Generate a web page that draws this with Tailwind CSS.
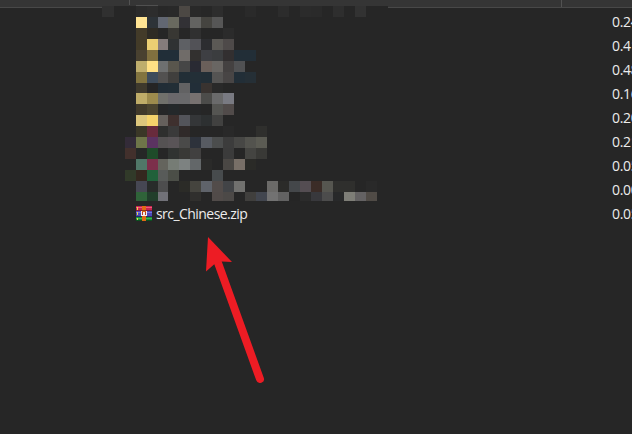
<!DOCTYPE html>
<html lang="en">
<head>
<meta charset="utf-8">
<title>Archive files</title>
<script src="https://cdn.jsdelivr.net/npm/@tailwindcss/browser@4"></script>
</head>
<body class="relative h-[434px] w-[632px] overflow-hidden bg-[#262626] font-['Open_Sans','Noto_Sans',sans-serif] text-[#ececec]">
<header class="flex h-2 w-full border-b border-[#484848] bg-[#353535]">
  <div class="h-[5px] w-[130px] border-r border-[#525252]"></div>
  <div class="relative w-[432px] overflow-hidden border-r border-[#525252]">
    <span class="absolute left-[9px] -top-[14px] font-['Noto_Sans_CJK_SC',sans-serif] text-[12px] leading-[16px]">名称</span>
    <div class="absolute left-1.5 top-[5px] h-px w-[22px] bg-[#505050]"></div>
  </div>
</header>
<main class="flex justify-between">
  <section class="w-[400px]">
    <div id="mosaic" class="relative -mt-0.5 pl-[102px]"></div>
    <div class="flex h-[26px] items-center pl-[136px]">
      <svg class="h-4 w-4" viewBox="0 0 16 16" shape-rendering="crispEdges">
        <path fill="#c8254f" d="M0 0h16v5H0z"/><path fill="#ef5d7c" d="M0 1h16v1H0z"/><path fill="#7c1838" d="M0 4h16v1H0z"/>
        <path fill="#4949b8" d="M0 5h16v6H0z"/><path fill="#7777dc" d="M0 6h16v1H0z"/><path fill="#292968" d="M0 10h16v1H0z"/>
        <path fill="#178a35" d="M0 11h16v4H0z"/><path fill="#39b650" d="M0 12h16v1H0z"/><path fill="#0b4f20" d="M0 14h16v1H0z"/>
        <path fill="#e6d44c" d="M1 1h1v3H1zM1 6h1v3H1zM1 12h1v2H1z"/>
        <path fill="#df6a16" d="M6 0h4v15H6z"/><path fill="#8a3a18" d="M6 4h4v1H6z"/>
        <path fill="#f5eee8" d="M5 5h1v5H5zM10 5h1v5h-1zM6 9h4v1H6zM7 6h2v3H7z"/><path fill="#b83a24" d="M6 6h1v3H6zM9 6h1v3H9z"/>
      </svg>
      <span class="ml-1 text-[14px] leading-4 tracking-[-0.55px]">src_Chinese.zip</span>
    </div>
  </section>
  <section class="w-5 overflow-hidden pt-0.5 text-[14px] leading-6 tracking-[-0.3px] whitespace-nowrap">
    <div>0.24</div><div>0.41</div><div>0.48</div><div>0.16</div><div>0.20</div><div>0.21</div><div>0.05</div><div>0.00</div><div>0.05</div>
  </section>
</main>
<svg class="absolute left-[200px] top-[232px] h-[156px] w-[70px]" viewBox="200 232 70 156">
  <path d="M217 260 260 379" stroke="#ed1c24" stroke-width="8" stroke-linecap="round"/>
  <path fill="#ed1c24" d="M208 237 232 262 221.500 261.500 214 264.500 206 271.500z"/>
</svg>
<script>
// Every row: its height, then the cells from x = 102 on; "-" is the plain background.
const widths = [12, 11, 11, 11, 11, 10, 11, 11, 11, 11, 11, 11, 11, 11, 11, 11, 11, 11, 11, 11, 11, 11, 11, 11, 11, 11];
const rows = [
  [11, "303030 - - 2b2b2b 2d2d2d 282828 292929 4c4844 292929 272727 2d2d2d - - 2a2a2a - - 2c2c2c - 2b2b2b 2a2a2a - 2e2e2e - 323232"],
  [11, "- - - ffe493 2d3338 626772 69695f 323135 636361 454440 565656"],
  [11, "- - - 433b29 2e2b24 262626 383733 272727 303030 262626 262626 2b2b2b"],
  [11, "- - - 433b28 ebcf73 857c7b 2f3233 5e6064 525257 2c2d30 5b5955 4e4a49"],
  [11, "- - - 494130 80703f 212e38 212e38 706c69 32302f 3e3f43 3b3d3f 322f30 222e37 222e37"],
  [11, "- - - bead6c ffe084 6e7070 59564d 464646 292a33 6a5f5a 696663 444141 505153"],
  [11, "- - - 82743f 3e4c5b 525150 403f3d 222e36 232f37 222e36 555453 484545 222e37 252f36"],
  [10, "- - - 3e392c 252525 212d36 222e36 626263 222e38 393330 292929"],
  [11, "- - - bfac68 9d8b4d 70706b 6a686b 69696b 777170 4c4c4a 6a6a6b 797a82"],
  [11, "- - - 40392a 4b442f 252627 24282a 262728 262728 262626 555552 514b4a"],
  [11, "- - - dcc67c f5d36b 65605c 3e302e 53545a 343638 2d3031 414140"],
  [11, "- - - 3a3727 682b3c 2e2f2e 3a3a3a 302a29 262626 262626 262626 292929 - - 2f2f2d"],
  [11, "- - 332b38 6e7549 5b3361 555253 595457 4a4a49 2d323b 575b62 4b4d4d 3c3c3c 474745 53534e 5b5b53"],
  [11, "- - 42302c 252726 1e4b29 262626 303331 393936 414040 262626 262626 3b3b3b 262626 444441 393936"],
  [11, "- - - 507768 7c2f4b 64645d 767c75 7d8281 636769 2a2a29 - 4a4744 786f67 2a2a27"],
  [11, "- - 313a29 34281f 20613a 585b59 4b4e47 - - - 474b4d"],
  [11, "- - - 464753 282b2a 4d4d4e 262626 2b2b27 45443e 5f636a 524c4a 424447 71716f - - 6b6a68 2b2b29 44474a 544d52 3b2c27 565650 2f2f2d 2f2f2d - 292929"],
  [9, "- - - 2f6339 213e2b 717178 - - 302f2d - 514b49 4c4947 262626 403f3d 42464f 727272 626262 252525 2b2b2b 38383c 4c4c4c 28292a 7e7e77 646263 504b46"]
];
const mosaic = document.getElementById("mosaic");
for (const [height, cells] of rows) {
  const row = document.createElement("div");
  row.className = "flex";
  row.style.height = height + "px";
  const colors = cells.split(" ");
  widths.forEach((width, i) => {
    const cell = document.createElement("div");
    cell.className = "shrink-0";
    cell.style.width = width + "px";
    cell.style.background = !colors[i] || colors[i] === "-" ? "#262626" : "#" + colors[i];
    row.append(cell);
  });
  mosaic.append(row);
}
</script>
</body>
</html>
